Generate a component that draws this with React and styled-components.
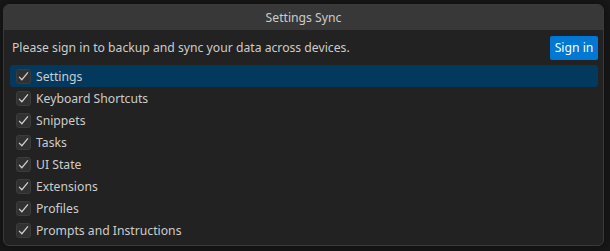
import React, { useState } from "react";
import styled, { createGlobalStyle } from "styled-components";

const GlobalStyle = createGlobalStyle`
  html, body {
    margin: 0;
    padding: 0;
    background: #181818;
    font-family: "Noto Sans", "Open Sans", sans-serif;
  }
`;

const Page = styled.div`
  width: 610px;
  height: 251px;
  padding: 4px 6px 0 3px;
  box-sizing: border-box;
  overflow: hidden;
`;

const Widget = styled.div`
  width: 601px;
  height: 242px;
  background: #222222;
  border: 1px solid #3a3a3a;
  border-radius: 6px;
  box-shadow: 0 0 8px 2px rgba(0, 0, 0, 0.36);
  box-sizing: border-box;
  overflow: hidden;
  display: flex;
  flex-direction: column;
`;

const Title = styled.div`
  height: 25px;
  background: #383838;
  color: #cccccc;
  font-size: 12.2px;
  display: flex;
  align-items: center;
  justify-content: center;
`;

const Header = styled.div`
  display: flex;
  align-items: center;
  justify-content: space-between;
  padding: 5px 5px 0 8px;
  height: 25px;
`;

const Message = styled.span`
  color: #cccccc;
  font-size: 12.2px;
`;

const Button = styled.button`
  background: #0078d4;
  color: #ffffff;
  border: none;
  border-radius: 2px;
  font-family: inherit;
  font-size: 12.2px;
  height: 24px;
  width: 48px;
  padding: 0;
  cursor: pointer;
`;

const List = styled.div`
  display: flex;
  flex-direction: column;
  padding: 5px 5px 0 6px;
`;

const Row = styled.div`
  height: 22px;
  display: flex;
  align-items: center;
  gap: 5px;
  padding-left: 6px;
  border-radius: 3px;
  background: ${(p) => (p.$active ? "#04395e" : "transparent")};
  color: #cccccc;
  font-size: 12.2px;
  cursor: pointer;
`;

const Box = styled.span`
  width: 15px;
  height: 15px;
  box-sizing: border-box;
  border: 1px solid #3c3c3c;
  border-radius: 3px;
  background: #313131;
  display: flex;
  align-items: center;
  justify-content: center;
`;

const Check = () => (
  <svg width="13" height="13" viewBox="0 0 16 16">
    <path d="M2.5 8.5 L6 12 L13.5 3" fill="none" stroke="#d0d0d0" strokeWidth="1.5" />
  </svg>
);

const items = [
  "Settings",
  "Keyboard Shortcuts",
  "Snippets",
  "Tasks",
  "UI State",
  "Extensions",
  "Profiles",
  "Prompts and Instructions",
];

export default function App() {
  const [active, setActive] = useState(0);
  return (
    <>
      <GlobalStyle />
      <Page>
        <Widget>
          <Title>Settings Sync</Title>
          <Header>
            <Message>Please sign in to backup and sync your data across devices.</Message>
            <Button>Sign in</Button>
          </Header>
          <List>
            {items.map((item, index) => (
              <Row key={item} $active={index === active} onClick={() => setActive(index)}>
                <Box>
                  <Check />
                </Box>
                {item}
              </Row>
            ))}
          </List>
        </Widget>
      </Page>
    </>
  );
}
